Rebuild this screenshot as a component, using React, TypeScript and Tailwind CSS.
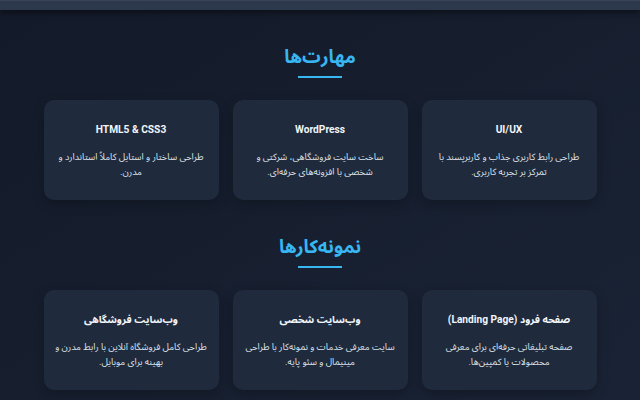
import React from "react";

type Item = { title: string; desc: string };

const skills: Item[] = [
  { title: "UI/UX", desc: "طراحی رابط کاربری جذاب و کاربرپسند با تمرکز بر تجربه کاربری." },
  { title: "WordPress", desc: "ساخت سایت فروشگاهی، شرکتی و شخصی با افزونه‌های حرفه‌ای." },
  { title: "HTML5 & CSS3", desc: "طراحی ساختار و استایل کاملاً استاندارد و مدرن." },
];

const works: Item[] = [
  { title: "صفحه فرود (Landing Page)", desc: "صفحه تبلیغاتی حرفه‌ای برای معرفی محصولات یا کمپین‌ها." },
  { title: "وب‌سایت شخصی", desc: "سایت معرفی خدمات و نمونه‌کار با طراحی مینیمال و سئو پایه." },
  { title: "وب‌سایت فروشگاهی", desc: "طراحی کامل فروشگاه آنلاین با رابط مدرن و بهینه برای موبایل." },
];

function SectionTitle({ children }: { children: React.ReactNode }) {
  return (
    <div className="flex flex-col items-center">
      <h2 className="text-[18.5px] leading-[30px] font-bold text-[#38b6f1]">{children}</h2>
      <div className="mt-[4px] h-[2px] w-[44px] bg-[#38b6f1]" />
    </div>
  );
}

function Card({ item }: { item: Item }) {
  return (
    <div className="h-[100px] rounded-[10px] bg-[#1f2a3c] px-[11px] pt-[22px] text-center shadow-[0_4px_12px_rgba(0,0,0,0.25)]">
      <h3 className="text-[10.2px] leading-[16px] font-bold text-[#f1f5f9]">{item.title}</h3>
      <p className="mt-[11px] text-[9.2px] leading-[15px] text-[#dde2ea]">{item.desc}</p>
    </div>
  );
}

export default function App() {
  return (
    <div
      dir="rtl"
      className="h-[400px] w-[640px] overflow-hidden bg-gradient-to-br from-[#131a29] to-[#1a2335]"
      style={{ fontFamily: 'Roboto, "Noto Sans Arabic", sans-serif' }}
    >
      <div className="h-[10px] border-t border-[#3a4456] bg-[#2c384b] shadow-[0_3px_6px_rgba(0,0,0,0.45)]" />

      <section className="pt-[32px]">
        <SectionTitle>مهارت‌ها</SectionTitle>
        <div className="mx-auto mt-[22px] grid w-[553px] grid-cols-3 gap-[14px]">
          {skills.map((s) => (
            <Card key={s.title} item={s} />
          ))}
        </div>
      </section>

      <section className="pt-[32px]">
        <SectionTitle>نمونه‌کارها</SectionTitle>
        <div className="mx-auto mt-[22px] grid w-[553px] grid-cols-3 gap-[14px]">
          {works.map((w) => (
            <Card key={w.title} item={w} />
          ))}
        </div>
      </section>
    </div>
  );
}
